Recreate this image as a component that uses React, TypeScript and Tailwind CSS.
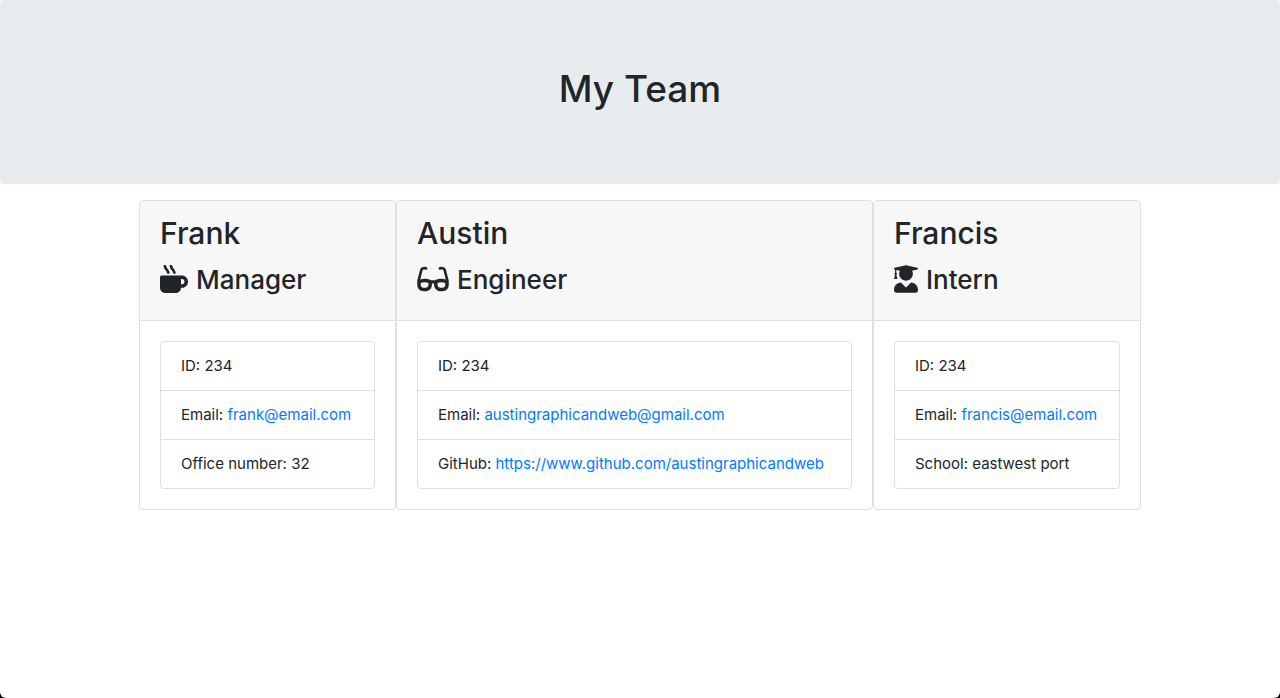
import { FaGlasses, FaMugHot, FaUserGraduate } from "react-icons/fa";
import type { ReactNode } from "react";

type Row = { label: string; value: string; href?: string };
type Member = { name: string; role: string; icon: ReactNode; width: string; rows: Row[] };

const team: Member[] = [
  {
    name: "Frank",
    role: "Manager",
    width: "min-w-[257px]",
    icon: <FaMugHot className="h-7 w-7" aria-hidden="true" />,
    rows: [
      { label: "ID", value: "234" },
      { label: "Email", value: "frank@email.com", href: "mailto:frank@email.com" },
      { label: "Office number", value: "32" },
    ],
  },
  {
    name: "Austin",
    role: "Engineer",
    width: "min-w-[477px]",
    icon: <FaGlasses className="h-7 w-8" aria-hidden="true" />,
    rows: [
      { label: "ID", value: "234" },
      { label: "Email", value: "austingraphicandweb@gmail.com", href: "mailto:austingraphicandweb@gmail.com" },
      { label: "GitHub", value: "https://www.github.com/austingraphicandweb", href: "https://www.github.com/austingraphicandweb" },
    ],
  },
  {
    name: "Francis",
    role: "Intern",
    width: "min-w-[268px]",
    icon: <FaUserGraduate className="h-7 w-6" aria-hidden="true" />,
    rows: [
      { label: "ID", value: "234" },
      { label: "Email", value: "francis@email.com", href: "mailto:francis@email.com" },
      { label: "School", value: "eastwest port" },
    ],
  },
];

function Card({ name, role, icon, width, rows }: Member) {
  return (
    <article className={`rounded border border-[#dfdfdf] bg-white ${width}`}>
      <header className="rounded-t border-b border-[#dfdfdf] bg-[#f7f7f7] px-5 pt-3 pb-5">
        <h2 className="mb-[7px] text-[30px] leading-10 font-medium">{name}</h2>
        <h3 className="flex items-start gap-2 text-[26px] leading-10 font-medium">
          <span className="pt-[5px]">{icon}</span>
          {role}
        </h3>
      </header>
      <div className="p-5">
        <ul className="divide-y divide-[#dfdfdf] rounded border border-[#dfdfdf]">
          {rows.map((row) => (
            <li key={row.label} className="px-5 py-3 leading-6 whitespace-nowrap">
              {row.label}:{" "}
              {row.href ? (
                <a href={row.href} className="text-[#007bff] hover:underline">
                  {row.value}
                </a>
              ) : (
                row.value
              )}
            </li>
          ))}
        </ul>
      </div>
    </article>
  );
}

export default function App() {
  return (
    <div className="flex min-h-screen flex-col bg-black font-['Inter',sans-serif] text-[15px] text-[#212529]">
      <div className="flex-1 rounded-b-md bg-white">
        <header className="mb-4 rounded bg-[#e9ecef] px-8 pt-16 pb-[70px] text-center">
          <h1 className="text-[37px] leading-[50px] font-medium">My Team</h1>
        </header>
        <main className="flex flex-wrap justify-center">
          {team.map((member) => (
            <Card key={member.name} {...member} />
          ))}
        </main>
      </div>
    </div>
  );
}
